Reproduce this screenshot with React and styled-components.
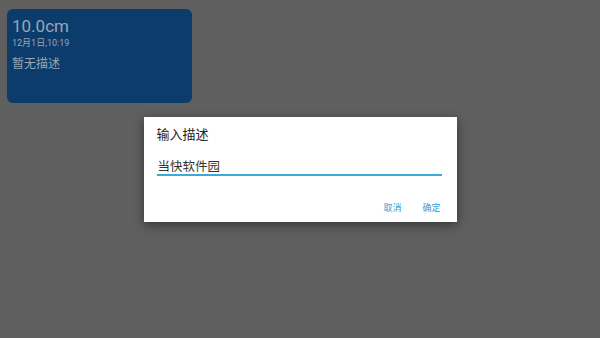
import React from "react";
import styled, { createGlobalStyle } from "styled-components";

const GlobalStyle = createGlobalStyle`
  html, body {
    margin: 0;
    padding: 0;
    background: #5f5f5f;
    font-family: Roboto, "Noto Sans CJK SC", sans-serif;
  }
`;

const Screen = styled.div`
  position: relative;
  width: 600px;
  height: 338px;
  overflow: hidden;
  background: #5f5f5f;
`;

const Grid = styled.div`
  display: flex;
  padding: 9px 0 0 7px;
`;

const Card = styled.div`
  width: 185px;
  height: 94px;
  box-sizing: border-box;
  padding: 7px 5px;
  border-radius: 6px;
  background: #0c3c6c;
  color: #9aa6b3;
  display: flex;
  flex-direction: column;
`;

const Size = styled.div`
  font-size: 17px;
  line-height: 20px;
`;

const Stamp = styled.div`
  font-size: 9px;
  line-height: 12px;
  margin-top: 1px;
`;

const Note = styled.div`
  font-size: 12px;
  line-height: 14px;
  margin-top: 8px;
`;

const Overlay = styled.div`
  position: absolute;
  inset: 0;
  display: flex;
  align-items: center;
  justify-content: center;
`;

const Dialog = styled.div`
  width: 313px;
  height: 105px;
  box-sizing: border-box;
  padding: 10px 15px 0 13px;
  background: #ffffff;
  box-shadow: 0 3px 10px rgba(0, 0, 0, 0.45);
  display: flex;
  flex-direction: column;
`;

const Title = styled.div`
  font-size: 13px;
  line-height: 16px;
  color: #222;
`;

const Field = styled.div`
  margin-top: 17px;
  padding: 0 0 0 1px;
  font-size: 12.5px;
  line-height: 14px;
  color: #333;
  border-bottom: 2px solid #3ea8d8;
`;

const Actions = styled.div`
  display: flex;
  justify-content: flex-end;
  gap: 21px;
  margin-top: 26px;
  padding-right: 1px;
`;

const ActionButton = styled.span`
  font-size: 9px;
  line-height: 12px;
  color: #2b9fd4;
`;

export default function App() {
  return (
    <Screen>
      <GlobalStyle />
      <Grid>
        <Card>
          <Size>10.0cm</Size>
          <Stamp>12月1日,10:19</Stamp>
          <Note>暂无描述</Note>
        </Card>
      </Grid>
      <Overlay>
        <Dialog>
          <Title>输入描述</Title>
          <Field>当快软件园</Field>
          <Actions>
            <ActionButton>取消</ActionButton>
            <ActionButton>确定</ActionButton>
          </Actions>
        </Dialog>
      </Overlay>
    </Screen>
  );
}
